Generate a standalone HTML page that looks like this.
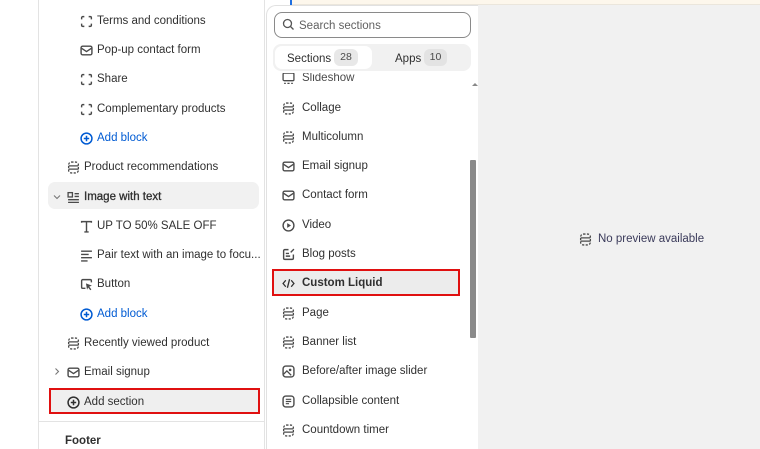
<!DOCTYPE html>
<html><head><meta charset="utf-8"><style>
*{margin:0;padding:0;box-sizing:border-box}
html,body{width:760px;height:449px;overflow:hidden}
body{background:#fff;font-family:"Liberation Sans",sans-serif;font-size:11.5px;color:#303030;position:relative}
.a{position:absolute}
.row{position:absolute;height:16px;line-height:16px;white-space:nowrap;margin-top:1px}
.row svg{position:absolute;left:-0.5px;top:1.5px;width:13px;height:13px}
.row span{position:absolute;top:0}
.blue{color:#005bd3}
</style></head><body>
<div class="a" style="left:38px;top:0;width:1px;height:449px;background:#e3e3e3"></div>
<div class="a" style="left:264px;top:0;width:1px;height:449px;background:#e3e3e3"></div>
<div class="a" style="left:48px;top:182px;width:211px;height:27px;background:#f1f1f1;border-radius:7px"></div>
<div class="a" style="left:49px;top:388px;width:211px;height:26px;background:#efefef;border:2px solid #e01010"></div>
<div class="a" style="left:38px;top:421px;width:227px;height:1px;background:#e3e3e3"></div>

<svg width="0" height="0" style="position:absolute"><defs>
<g id="dash"><path d="M1.5 4V2.5a1 1 0 0 1 1-1H4M8 1.5h1.5a1 1 0 0 1 1 1V4M10.5 8v1.5a1 1 0 0 1-1 1H8M4 10.5H2.5a1 1 0 0 1-1-1V8" fill="none" stroke="#4a4a4a" stroke-width="1.3"/></g>
<g id="mail"><rect x="1" y="2" width="10" height="8" rx="1.5" fill="none" stroke="#4a4a4a" stroke-width="1.3"/><path d="M1.5 4l4.5 3 4.5-3" fill="none" stroke="#4a4a4a" stroke-width="1.3"/></g>
<g id="sec"><rect x="1.5" y="1" width="9" height="10" rx="2.5" fill="none" stroke="#4a4a4a" stroke-width="1.2" stroke-dasharray="2 1.3"/><path d="M1.5 4.5h9M1.5 7.5h9" stroke="#4a4a4a" stroke-width="1.2"/></g>
<g id="plus"><circle cx="6" cy="6" r="5" fill="none" stroke="#005bd3" stroke-width="1.4"/><path d="M6 3.5v5M3.5 6h5" stroke="#005bd3" stroke-width="1.4"/></g>
<g id="plusd"><circle cx="6" cy="6" r="5" fill="none" stroke="#303030" stroke-width="1.4"/><path d="M6 3.5v5M3.5 6h5" stroke="#303030" stroke-width="1.4"/></g>
</defs></svg>

<div class="row" style="left:80px;top:12px"><svg viewBox="0 0 12 12"><use href="#dash"/></svg><span style="left:17px">Terms and conditions</span></div>
<div class="row" style="left:80px;top:41px"><svg viewBox="0 0 12 12"><use href="#mail"/></svg><span style="left:17px">Pop-up contact form</span></div>
<div class="row" style="left:80px;top:70px"><svg viewBox="0 0 12 12"><use href="#dash"/></svg><span style="left:17px">Share</span></div>
<div class="row" style="left:80px;top:100px"><svg viewBox="0 0 12 12"><use href="#dash"/></svg><span style="left:17px">Complementary products</span></div>
<div class="row blue" style="left:80px;top:129px"><svg viewBox="0 0 12 12"><use href="#plus"/></svg><span style="left:17px">Add block</span></div>
<div class="row" style="left:67px;top:158px"><svg viewBox="0 0 12 12"><use href="#sec"/></svg><span style="left:17px">Product recommendations</span></div>
<div class="row" style="left:53px;top:188px"><svg viewBox="0 0 8 12" style="width:8px;height:12px;top:2px"><path d="M1 4.5l3 3 3-3" fill="none" stroke="#777" stroke-width="1.1"/></svg></div>
<div class="row" style="left:67px;top:188px"><svg viewBox="0 0 12 12"><rect x="1" y="1.5" width="4" height="4" fill="none" stroke="#4a4a4a" stroke-width="1.2"/><path d="M7 2.5h4M7 5h4M1 8h10M1 10.5h10" stroke="#4a4a4a" stroke-width="1.2"/></svg><span style="left:17px;-webkit-text-stroke:0.3px #303030">Image with text</span></div>
<div class="row" style="left:80px;top:217px"><svg viewBox="0 0 12 12"><path d="M1.5 2.5V1.5h9v1M6 1.5v9.5M4 11h4" fill="none" stroke="#4a4a4a" stroke-width="1.3"/></svg><span style="left:17px">UP TO 50% SALE OFF</span></div>
<div class="row" style="left:80px;top:246px"><svg viewBox="0 0 12 12"><path d="M1 2h10M1 5h7M1 8h10M1 11h6" stroke="#4a4a4a" stroke-width="1.2"/></svg><span style="left:17px">Pair text with an image to focu...</span></div>
<div class="row" style="left:80px;top:275px"><svg viewBox="0 0 12 12"><path d="M5 9.5H2.5a1 1 0 0 1-1-1v-6a1 1 0 0 1 1-1h7a1 1 0 0 1 1 1V4" fill="none" stroke="#4a4a4a" stroke-width="1.3"/><path d="M5.5 5l5.5 2-2.5 1 2 2.5-1 .8-2-2.5-1 2z" fill="#4a4a4a"/></svg><span style="left:17px">Button</span></div>
<div class="row blue" style="left:80px;top:305px"><svg viewBox="0 0 12 12"><use href="#plus"/></svg><span style="left:17px">Add block</span></div>
<div class="row" style="left:67px;top:334px"><svg viewBox="0 0 12 12"><use href="#sec"/></svg><span style="left:17px">Recently viewed product</span></div>
<div class="row" style="left:53px;top:363px"><svg viewBox="0 0 8 12" style="width:8px;height:12px"><path d="M2.5 2.5l3 3-3 3" fill="none" stroke="#777" stroke-width="1.1"/></svg></div>
<div class="row" style="left:67px;top:363px"><svg viewBox="0 0 12 12"><use href="#mail"/></svg><span style="left:17px">Email signup</span></div>
<div class="row" style="left:67px;top:393px"><svg viewBox="0 0 12 12"><use href="#plusd"/></svg><span style="left:17px">Add section</span></div>
<div class="row" style="left:65px;top:432px;font-weight:bold">Footer</div>

<div class="a" style="left:477px;top:0;width:283px;height:449px;background:#f1f1f1"></div>
<div class="a" style="left:290px;top:0;width:470px;height:5px;background:#fdf7ec;border-bottom:1px solid #ebe6dc"></div>
<div class="a" style="left:290px;top:0;width:2px;height:6px;background:#1f6fe0"></div>
<div class="row" style="left:579px;top:230px;color:#3a3a5a"><svg viewBox="0 0 12 12"><use href="#sec"/></svg><span style="left:19px">No preview available</span></div>

<div class="a" style="left:266px;top:5px;width:212px;height:444px;background:#fff;border:1px solid #e1e1e1;border-right:none;border-bottom:none;border-radius:10px 0 0 0"></div>
<div class="a" style="left:274px;top:12px;width:197px;height:26px;border:1px solid #8a8a8a;border-radius:8px"></div>
<svg class="a" style="left:282px;top:18px" width="13" height="13"><circle cx="5.5" cy="5.5" r="4" fill="none" stroke="#555" stroke-width="1.3"/><path d="M8.5 8.5l3 3" stroke="#555" stroke-width="1.3"/></svg>
<div class="row" style="left:299px;top:17px;color:#616161">Search sections</div>
<div class="a" style="left:273px;top:44px;width:198px;height:27px;background:#f1f1f1;border-radius:8px"></div>
<div class="a" style="left:275px;top:46px;width:97px;height:23px;background:#fff;border-radius:7px"></div>
<div class="row" style="left:287px;top:50px">Sections</div>
<div class="a" style="left:334px;top:49px;width:24px;height:17px;background:#e8e8e8;border-radius:6px;font-size:10.5px;line-height:17px;text-align:center;color:#4a4a4a">28</div>
<div class="row" style="left:395px;top:50px">Apps</div>
<div class="a" style="left:424px;top:49px;width:23px;height:17px;background:#e3e3e3;border-radius:6px;font-size:10.5px;line-height:17px;text-align:center;color:#4a4a4a">10</div>

<div class="a" style="left:267px;top:73px;width:200px;height:20px;overflow:hidden">
<div class="row" style="left:15px;top:-4px;color:#4a4a4a"><svg viewBox="0 0 12 12"><rect x="1" y="1" width="10" height="7" rx="1" fill="none" stroke="#4a4a4a" stroke-width="1.2"/><path d="M2 10.5h1.5M5 10.5h2M8.5 10.5H10" stroke="#4a4a4a" stroke-width="1.2"/></svg><span style="left:20px">Slideshow</span></div>
</div>
<div class="a" style="left:470px;top:160px;width:6px;height:178px;background:#8a8a8a;border-radius:1px"></div>
<div class="a" style="left:472px;top:80px;width:0;height:0;border:3px solid transparent;border-bottom-color:#888"></div>

<div class="a" style="left:272px;top:269px;width:188px;height:27px;background:#ececec;border:2px solid #e01010"></div>
<div class="row" style="left:282px;top:99px"><svg viewBox="0 0 12 12"><use href="#sec"/></svg><span style="left:20px">Collage</span></div>
<div class="row" style="left:282px;top:128px"><svg viewBox="0 0 12 12"><use href="#sec"/></svg><span style="left:20px">Multicolumn</span></div>
<div class="row" style="left:282px;top:157px"><svg viewBox="0 0 12 12"><use href="#mail"/></svg><span style="left:20px">Email signup</span></div>
<div class="row" style="left:282px;top:186px"><svg viewBox="0 0 12 12"><use href="#mail"/></svg><span style="left:20px">Contact form</span></div>
<div class="row" style="left:282px;top:216px"><svg viewBox="0 0 12 12"><circle cx="6" cy="6" r="5" fill="none" stroke="#4a4a4a" stroke-width="1.3"/><path d="M4.8 3.8v4.4L8.3 6z" fill="#4a4a4a"/></svg><span style="left:20px">Video</span></div>
<div class="row" style="left:282px;top:245px"><svg viewBox="0 0 12 12"><path d="M6 1.5H2.5a1 1 0 0 0-1 1v7a1 1 0 0 0 1 1h7a1 1 0 0 0 1-1V6M3.5 5h3M3.5 7.5h4M8 4l3-3" fill="none" stroke="#4a4a4a" stroke-width="1.3"/></svg><span style="left:20px">Blog posts</span></div>
<div class="row" style="left:282px;top:274px;font-weight:bold"><svg viewBox="0 0 12 12"><path d="M3.5 3L1 6l2.5 3M8.5 3L11 6 8.5 9M7 2L5 10" fill="none" stroke="#303030" stroke-width="1.2"/></svg><span style="left:20px">Custom Liquid</span></div>
<div class="row" style="left:282px;top:304px"><svg viewBox="0 0 12 12"><use href="#sec"/></svg><span style="left:20px">Page</span></div>
<div class="row" style="left:282px;top:333px"><svg viewBox="0 0 12 12"><use href="#sec"/></svg><span style="left:20px">Banner list</span></div>
<div class="row" style="left:282px;top:362px"><svg viewBox="0 0 12 12"><rect x="1" y="1" width="10" height="10" rx="2.5" fill="none" stroke="#4a4a4a" stroke-width="1.3"/><circle cx="7.5" cy="4.5" r="1.2" fill="#4a4a4a"/><path d="M1.5 8.5l3-3 4 4" fill="none" stroke="#4a4a4a" stroke-width="1.2"/></svg><span style="left:20px">Before/after image slider</span></div>
<div class="row" style="left:282px;top:392px"><svg viewBox="0 0 12 12"><rect x="1" y="1" width="10" height="10" rx="2.5" fill="none" stroke="#4a4a4a" stroke-width="1.3"/><path d="M3.5 4h5M3.5 6h5M3.5 8h3" stroke="#4a4a4a" stroke-width="1.1"/></svg><span style="left:20px">Collapsible content</span></div>
<div class="row" style="left:282px;top:421px"><svg viewBox="0 0 12 12"><use href="#sec"/></svg><span style="left:20px">Countdown timer</span></div>
</body></html>
